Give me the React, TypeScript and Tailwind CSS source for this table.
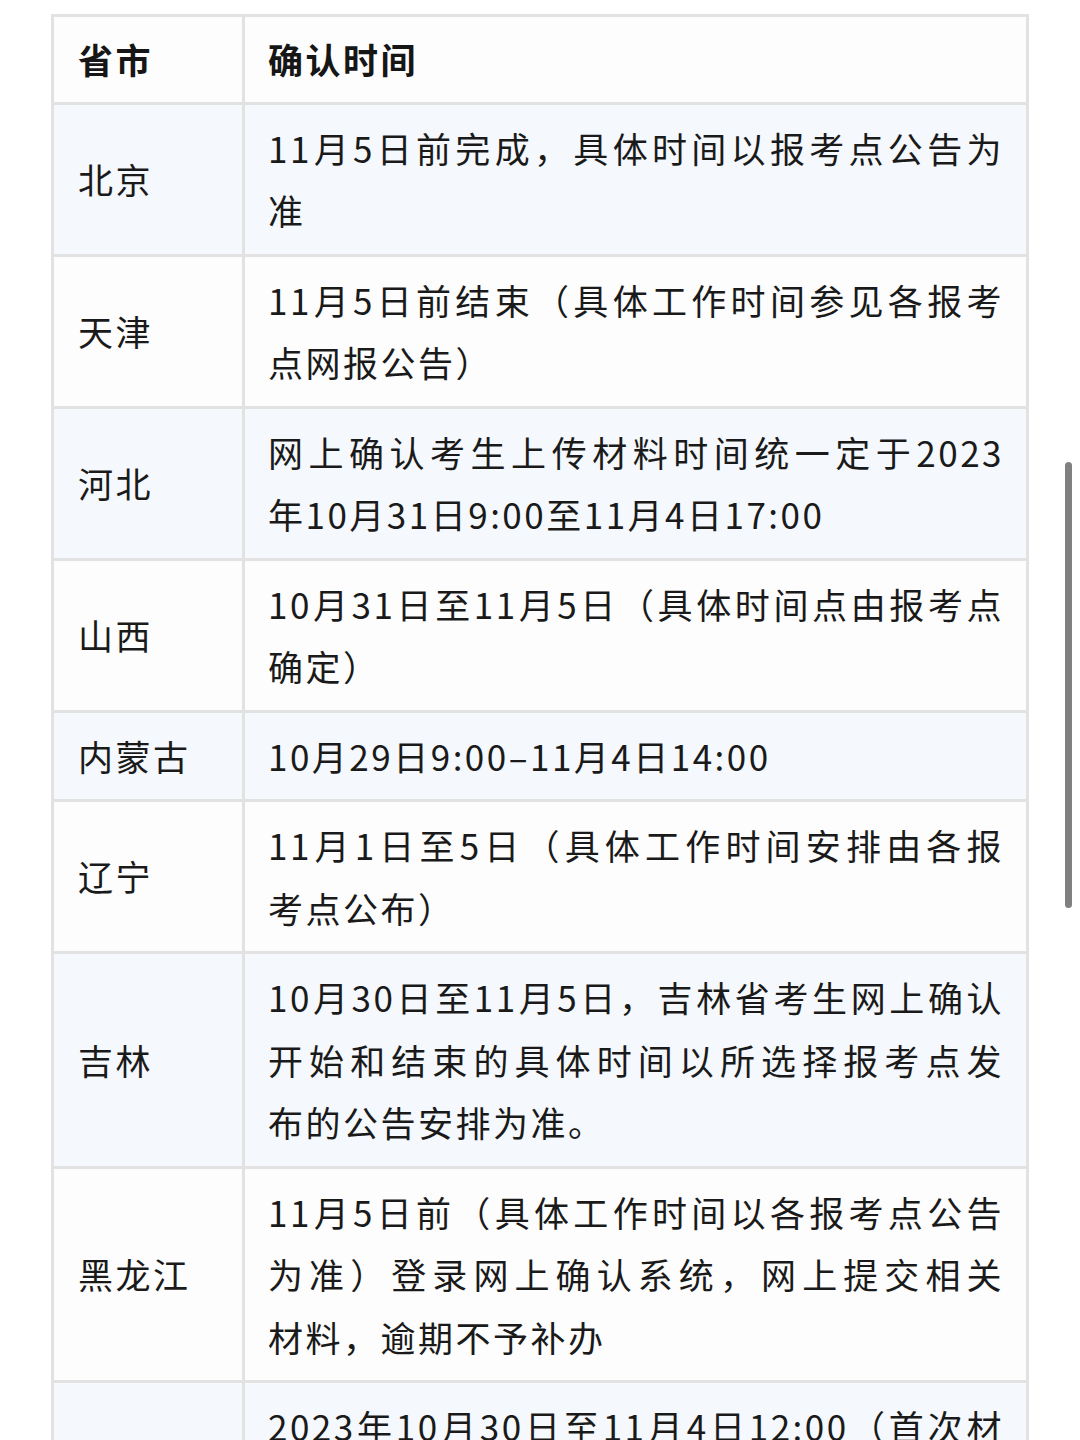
const rows: { name: string; lines: string[] }[] = [
  { name: '北京', lines: ['11月5日前完成，具体时间以报考点公告为', '准'] },
  { name: '天津', lines: ['11月5日前结束（具体工作时间参见各报考', '点网报公告）'] },
  { name: '河北', lines: ['网上确认考生上传材料时间统一定于2023', '年10月31日9:00至11月4日17:00'] },
  { name: '山西', lines: ['10月31日至11月5日（具体时间点由报考点', '确定）'] },
  { name: '内蒙古', lines: ['10月29日9:00–11月4日14:00'] },
  { name: '辽宁', lines: ['11月1日至5日（具体工作时间安排由各报', '考点公布）'] },
  {
    name: '吉林',
    lines: ['10月30日至11月5日，吉林省考生网上确认', '开始和结束的具体时间以所选择报考点发', '布的公告安排为准。'],
  },
  {
    name: '黑龙江',
    lines: ['11月5日前（具体工作时间以各报考点公告', '为准）登录网上确认系统，网上提交相关', '材料，逾期不予补办'],
  },
  {
    name: '上海',
    lines: ['2023年10月30日至11月4日12:00（首次材', '料上传），具体安排以报考点公告为准', '为准'],
  },
];

const font = "font-[family-name:'Noto_Sans_CJK_SC','Noto_Sans',sans-serif]";

const App = () => {
  return (
    <div className={`relative w-[1080px] h-[1440px] overflow-hidden bg-white text-[#1a1a1a] ${font}`}>
      <div className="pt-[14px] pl-[51px]">
        <div className="w-[978px] border-l-[3px] border-t-[3px] border-[#e2e2e2] text-[35px] tracking-[2.5px] leading-[62.5px]">
          {/* header */}
          <div className="grid grid-cols-[191px_784px] bg-[#fdfdfd] font-bold text-[#161616]">
            <div className="border-r-[3px] border-b-[3px] border-[#e2e2e2] pl-[24px] py-[11px]">省市</div>
            <div className="border-r-[3px] border-b-[3px] border-[#e2e2e2] pl-[23px] py-[11px]">确认时间</div>
          </div>

          {rows.map((row, i) => (
            <div
              key={row.name}
              className={`grid grid-cols-[191px_784px] ${i % 2 === 0 ? 'bg-[#f5f8fc]' : 'bg-[#fdfdfd]'}`}
            >
              <div className="flex items-center border-r-[3px] border-b-[3px] border-[#e2e2e2] pl-[24px]">
                {row.name}
              </div>
              <div className="border-r-[3px] border-b-[3px] border-[#e2e2e2] pl-[23px] pr-[22px] py-[12px]">
                {row.lines.map((line, j) => (
                  <div
                    key={j}
                    className={`whitespace-nowrap ${j < row.lines.length - 1 ? '[text-align-last:justify] text-justify' : ''}`}
                  >
                    {line}
                  </div>
                ))}
              </div>
            </div>
          ))}
        </div>
      </div>

      {/* scroll indicator */}
      <div className="absolute left-[1065px] top-[462px] w-[7px] h-[446px] rounded-full bg-[#808080]" />
    </div>
  );
};

export default App;
